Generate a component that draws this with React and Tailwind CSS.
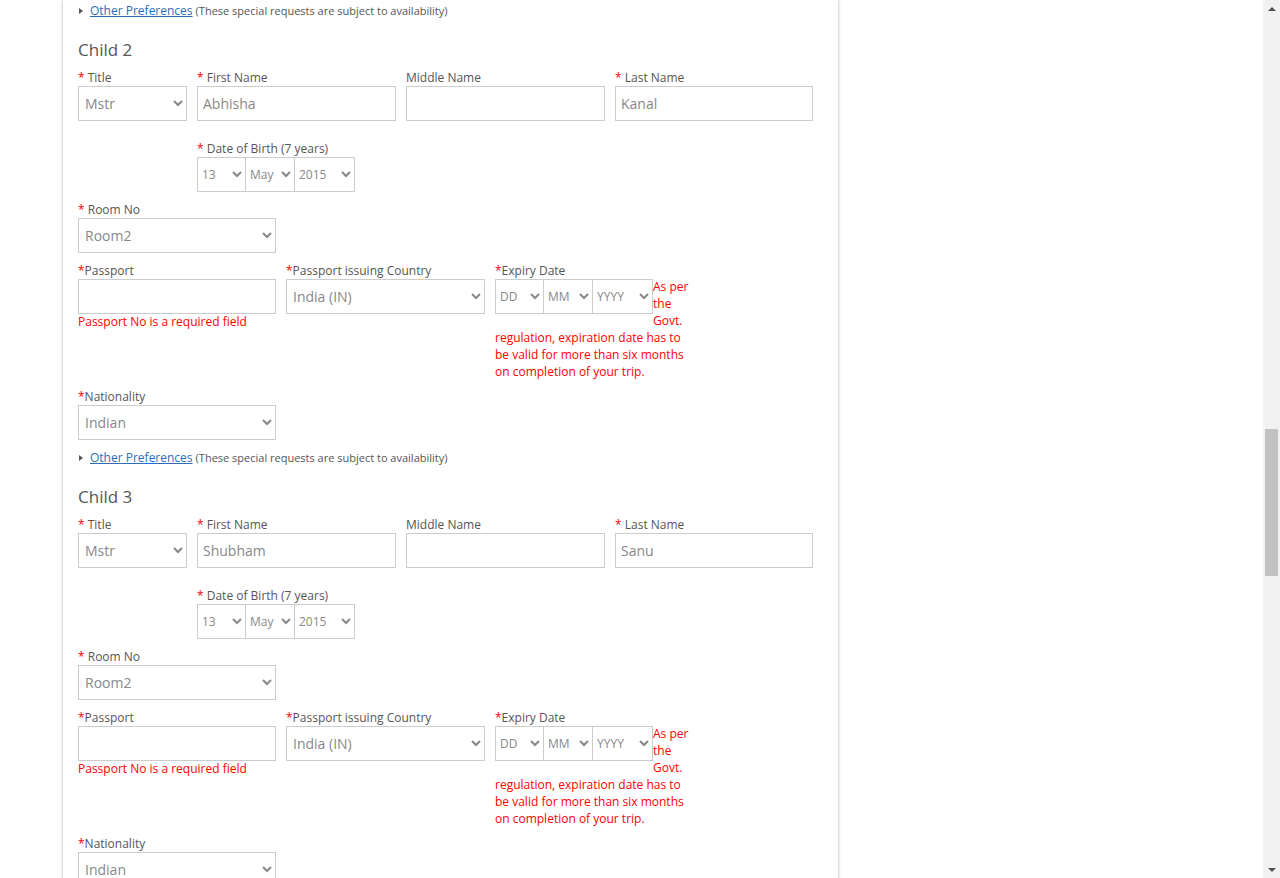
import React from "react";

const font = { fontFamily: '"Open Sans", "Liberation Sans", sans-serif' };

const Req = () => <span className="text-[#f00]">*</span>;

const Label = ({ req = true, space = true, children }) => (
  <div className="h-[17px] text-[12px] leading-[17px] text-[#555] whitespace-nowrap">
    {req && <Req />}
    {req && space ? " " : ""}
    {children}
  </div>
);

const Select = ({ value, className = "", small = false }) => (
  <select
    defaultValue={value}
    className={`h-[35px] border border-[#ccc] bg-white text-[#888] outline-none ${
      small ? "text-[12px] pl-0" : "text-[14px] pl-[2px]"
    } ${className}`}
  >
    <option>{value}</option>
  </select>
);

const Input = ({ value = "", className = "" }) => (
  <input
    defaultValue={value}
    className={`h-[35px] border border-[#ccc] bg-white px-[5px] text-[14px] text-[#888] outline-none ${className}`}
  />
);

const OtherPrefs = () => (
  <div className="flex items-center h-[17px] leading-[17px] whitespace-nowrap">
    <span className="ml-[1px] mr-[7px] w-0 h-0 border-y-[3.5px] border-y-transparent border-l-[4px] border-l-[#555]" />
    <a href="#" className="text-[12px] text-[#2a6ebb] underline">Other Preferences</a>
    <span className="ml-[3px] text-[11px] text-[#555]">(These special requests are subject to availability)</span>
  </div>
);

const Child = ({ n, first, last }) => (
  <div>
    <h3 className="mt-[19px] text-[17px] leading-[24px] text-[#555]">Child {n}</h3>

    <div className="mt-[7px] flex gap-[10px]">
      <div className="w-[109px]">
        <Label>Title</Label>
        <Select value="Mstr" className="w-full" />
      </div>
      <div className="w-[199px]">
        <Label>First Name</Label>
        <Input value={first} className="w-full" />
      </div>
      <div className="w-[199px]">
        <Label req={false}>Middle Name</Label>
        <Input className="w-full" />
      </div>
      <div className="w-[198px]">
        <Label>Last Name</Label>
        <Input value={last} className="w-full" />
      </div>
    </div>

    <div className="mt-[19px] ml-[119px]">
      <Label>Date of Birth (7 years)</Label>
      <div className="flex">
        <Select small value="13" className="w-[49px]" />
        <Select small value="May" className="w-[49px] border-l-0" />
        <Select small value="2015" className="w-[60px] border-l-0" />
      </div>
    </div>

    <div className="mt-[9px] w-[198px]">
      <Label>Room No</Label>
      <Select value="Room2" className="w-full" />
    </div>

    <div className="mt-[9px] flex gap-[10px]">
      <div className="w-[198px]">
        <Label space={false}>Passport</Label>
        <Input className="w-full" />
        <div className="-mt-[1px] text-[12px] leading-[17px] text-[#f00]">Passport No is a required field</div>
      </div>
      <div className="w-[199px]">
        <Label space={false}>Passport issuing Country</Label>
        <Select value="India (IN)" className="w-full" />
      </div>
      <div className="w-[199px]">
        <Label space={false}>Expiry Date</Label>
        <div className="-mt-[1px] text-[12px] leading-[17px] text-[#f00]">
          <div className="float-left flex mt-[1px]">
            <Select small value="DD" className="w-[49px]" />
            <Select small value="MM" className="w-[49px] border-l-0" />
            <Select small value="YYYY" className="w-[60px] border-l-0" />
          </div>
          As per the Govt. regulation, expiration date has to be valid for more than six months on completion of your trip.
        </div>
      </div>
    </div>

    <div className="mt-[8px] w-[198px]">
      <Label space={false}>Nationality</Label>
      <Select value="Indian" className="w-full" />
    </div>

    <div className="mt-[9px]">
      <OtherPrefs />
    </div>
  </div>
);

export default function App() {
  return (
    <div className="flex h-[878px] overflow-hidden bg-white" style={font}>
      <div className="flex-1 overflow-hidden">
        <div className="ml-[63px] w-[775px] min-h-[878px] bg-white shadow-[0_0_3px_rgba(0,0,0,0.35)] pl-[15px] pt-[2px]">
          <OtherPrefs />
          <Child n={2} first="Abhisha" last="Kanal" />
          <Child n={3} first="Shubham" last="Sanu" />
        </div>
      </div>
      <div className="w-[17px] h-full bg-[#f1f1f1] flex flex-col items-center">
        <div className="h-[17px] w-full flex items-center justify-center">
          <span className="w-0 h-0 border-x-[4px] border-x-transparent border-b-[4px] border-b-[#505050]" />
        </div>
        <div className="h-[412px]" />
        <div className="w-[13px] h-[147px] bg-[#c1c1c1]" />
        <div className="flex-1" />
        <div className="h-[17px] w-full flex items-center justify-center">
          <span className="w-0 h-0 border-x-[4px] border-x-transparent border-t-[4px] border-t-[#505050]" />
        </div>
      </div>
    </div>
  );
}
